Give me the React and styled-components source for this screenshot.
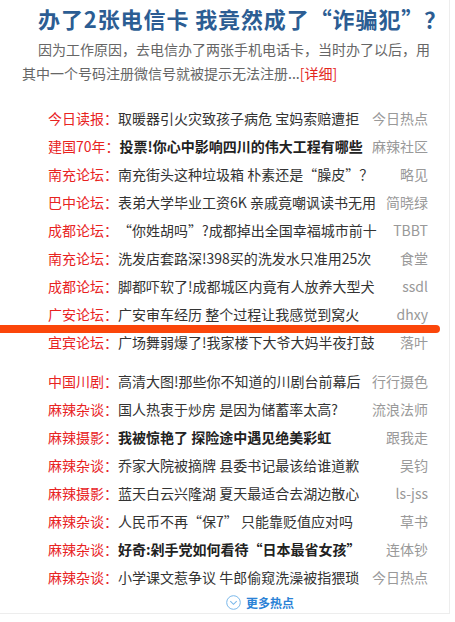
import React from "react";
import styled, { createGlobalStyle } from "styled-components";

const GlobalStyle = createGlobalStyle`
  body {
    margin: 0;
    background: #fff;
    font-family: "Noto Sans CJK SC", "Microsoft YaHei", sans-serif;
  }
`;

const Panel = styled.div`
  width: 450px;
  border-right: 1px solid #ededed;
  border-bottom: 1px solid #ededed;
  box-sizing: border-box;
`;

const Headline = styled.h1`
  margin: 0;
  padding: 3px 0 0 38px;
  font-size: 22px;
  line-height: 30px;
  font-weight: 700;
  letter-spacing: 0.9px;
  color: #2c5d93;
  white-space: nowrap;
`;

const Summary = styled.p`
  margin: 4px 0 0;
  padding: 0 18px 0 22px;
  font-size: 14px;
  line-height: 24px;
  color: #666;
  text-indent: 16px;
`;

const More = styled.a`
  color: #e3261c;
  text-decoration: none;
`;

const Group = styled.ul`
  list-style: none;
  margin: ${(p) => p.$top}px 0 0;
  padding: 0;
`;

const Row = styled.li`
  position: relative;
  display: flex;
  align-items: center;
  height: 28px;
  padding: 0 21px 0 48px;
  font-size: 14px;
  white-space: nowrap;
`;

const Category = styled.span`
  color: #e8231f;
`;

const Title = styled.span`
  color: ${(p) => (p.$bold ? "#222" : "#333")};
  font-weight: ${(p) => (p.$bold ? 700 : 400)};
`;

const Source = styled.span`
  margin-left: auto;
  color: #999;
`;

const Marker = styled.span`
  position: absolute;
  left: -11px;
  right: 9px;
  top: 25px;
  height: 8px;
  border-radius: 4px;
  background: #fb460a;
`;

const MoreBar = styled.div`
  display: flex;
  align-items: center;
  gap: 5px;
  height: 22px;
  padding-left: 226px;
  font-size: 12px;
  font-weight: 700;
  color: #2a82d6;
`;

const groupA = [
  ["今日读报", "取暖器引火灾致孩子病危 宝妈索赔遭拒", "今日热点"],
  ["建国70年", "投票!你心中影响四川的伟大工程有哪些", "麻辣社区", true],
  ["南充论坛", "南充街头这种垃圾箱 朴素还是“臊皮”？", "略见"],
  ["巴中论坛", "表弟大学毕业工资6K 亲戚竟嘲讽读书无用", "简晓绿"],
  ["成都论坛", "“你姓胡吗”?成都掉出全国幸福城市前十", "TBBT"],
  ["南充论坛", "洗发店套路深!398买的洗发水只准用25次", "食堂"],
  ["成都论坛", "脚都吓软了!成都城区内竟有人放养大型犬", "ssdl"],
  ["广安论坛", "广安审车经历 整个过程让我感觉到窝火", "dhxy", false, true],
  ["宜宾论坛", "广场舞弱爆了!我家楼下大爷大妈半夜打鼓", "落叶"],
];

const groupB = [
  ["中国川剧", "高清大图!那些你不知道的川剧台前幕后", "行行摄色"],
  ["麻辣杂谈", "国人热衷于炒房 是因为储蓄率太高?", "流浪法师"],
  ["麻辣摄影", "我被惊艳了 探险途中遇见绝美彩虹", "跟我走", true],
  ["麻辣杂谈", "乔家大院被摘牌 县委书记最该给谁道歉", "吴钧"],
  ["麻辣摄影", "蓝天白云兴隆湖 夏天最适合去湖边散心", "ls-jss"],
  ["麻辣杂谈", "人民币不再“保7” 只能靠贬值应对吗", "草书"],
  ["麻辣杂谈", "好奇:剁手党如何看待“日本最省女孩”", "连体钞", true],
  ["麻辣杂谈", "小学课文惹争议 牛郎偷窥洗澡被指猥琐", "今日热点"],
];

const NewsRow = ({ item }) => {
  const [cat, title, source, bold, marked] = item;
  return (
    <Row>
      <Category>{cat}：</Category>
      <Title $bold={bold}>{title}</Title>
      <Source>{source}</Source>
      {marked && <Marker />}
    </Row>
  );
};

const ChevronCircle = () => (
  <svg width="15" height="15" viewBox="0 0 15 15" fill="none">
    <circle cx="7.5" cy="7.5" r="6.8" stroke="#7ab8ea" strokeWidth="1" />
    <path d="M4.3 6.2 L7.5 9.3 L10.7 6.2" stroke="#7ab8ea" strokeWidth="1.1" />
  </svg>
);

export default function App() {
  return (
    <Panel lang="zh-CN">
      <GlobalStyle />
      <Headline>办了2张电信卡 我竟然成了“诈骗犯”？</Headline>
      <Summary>
        因为工作原因，去电信办了两张手机电话卡，当时办了以后，用其中一个号码注册微信号就被提示无法注册...<More href="#">[详细]</More>
      </Summary>
      <Group $top={19}>
        {groupA.map((item, i) => (
          <NewsRow key={i} item={item} />
        ))}
      </Group>
      <Group $top={11}>
        {groupB.map((item, i) => (
          <NewsRow key={i} item={item} />
        ))}
      </Group>
      <MoreBar>
        <ChevronCircle />
        更多热点
      </MoreBar>
    </Panel>
  );
}
